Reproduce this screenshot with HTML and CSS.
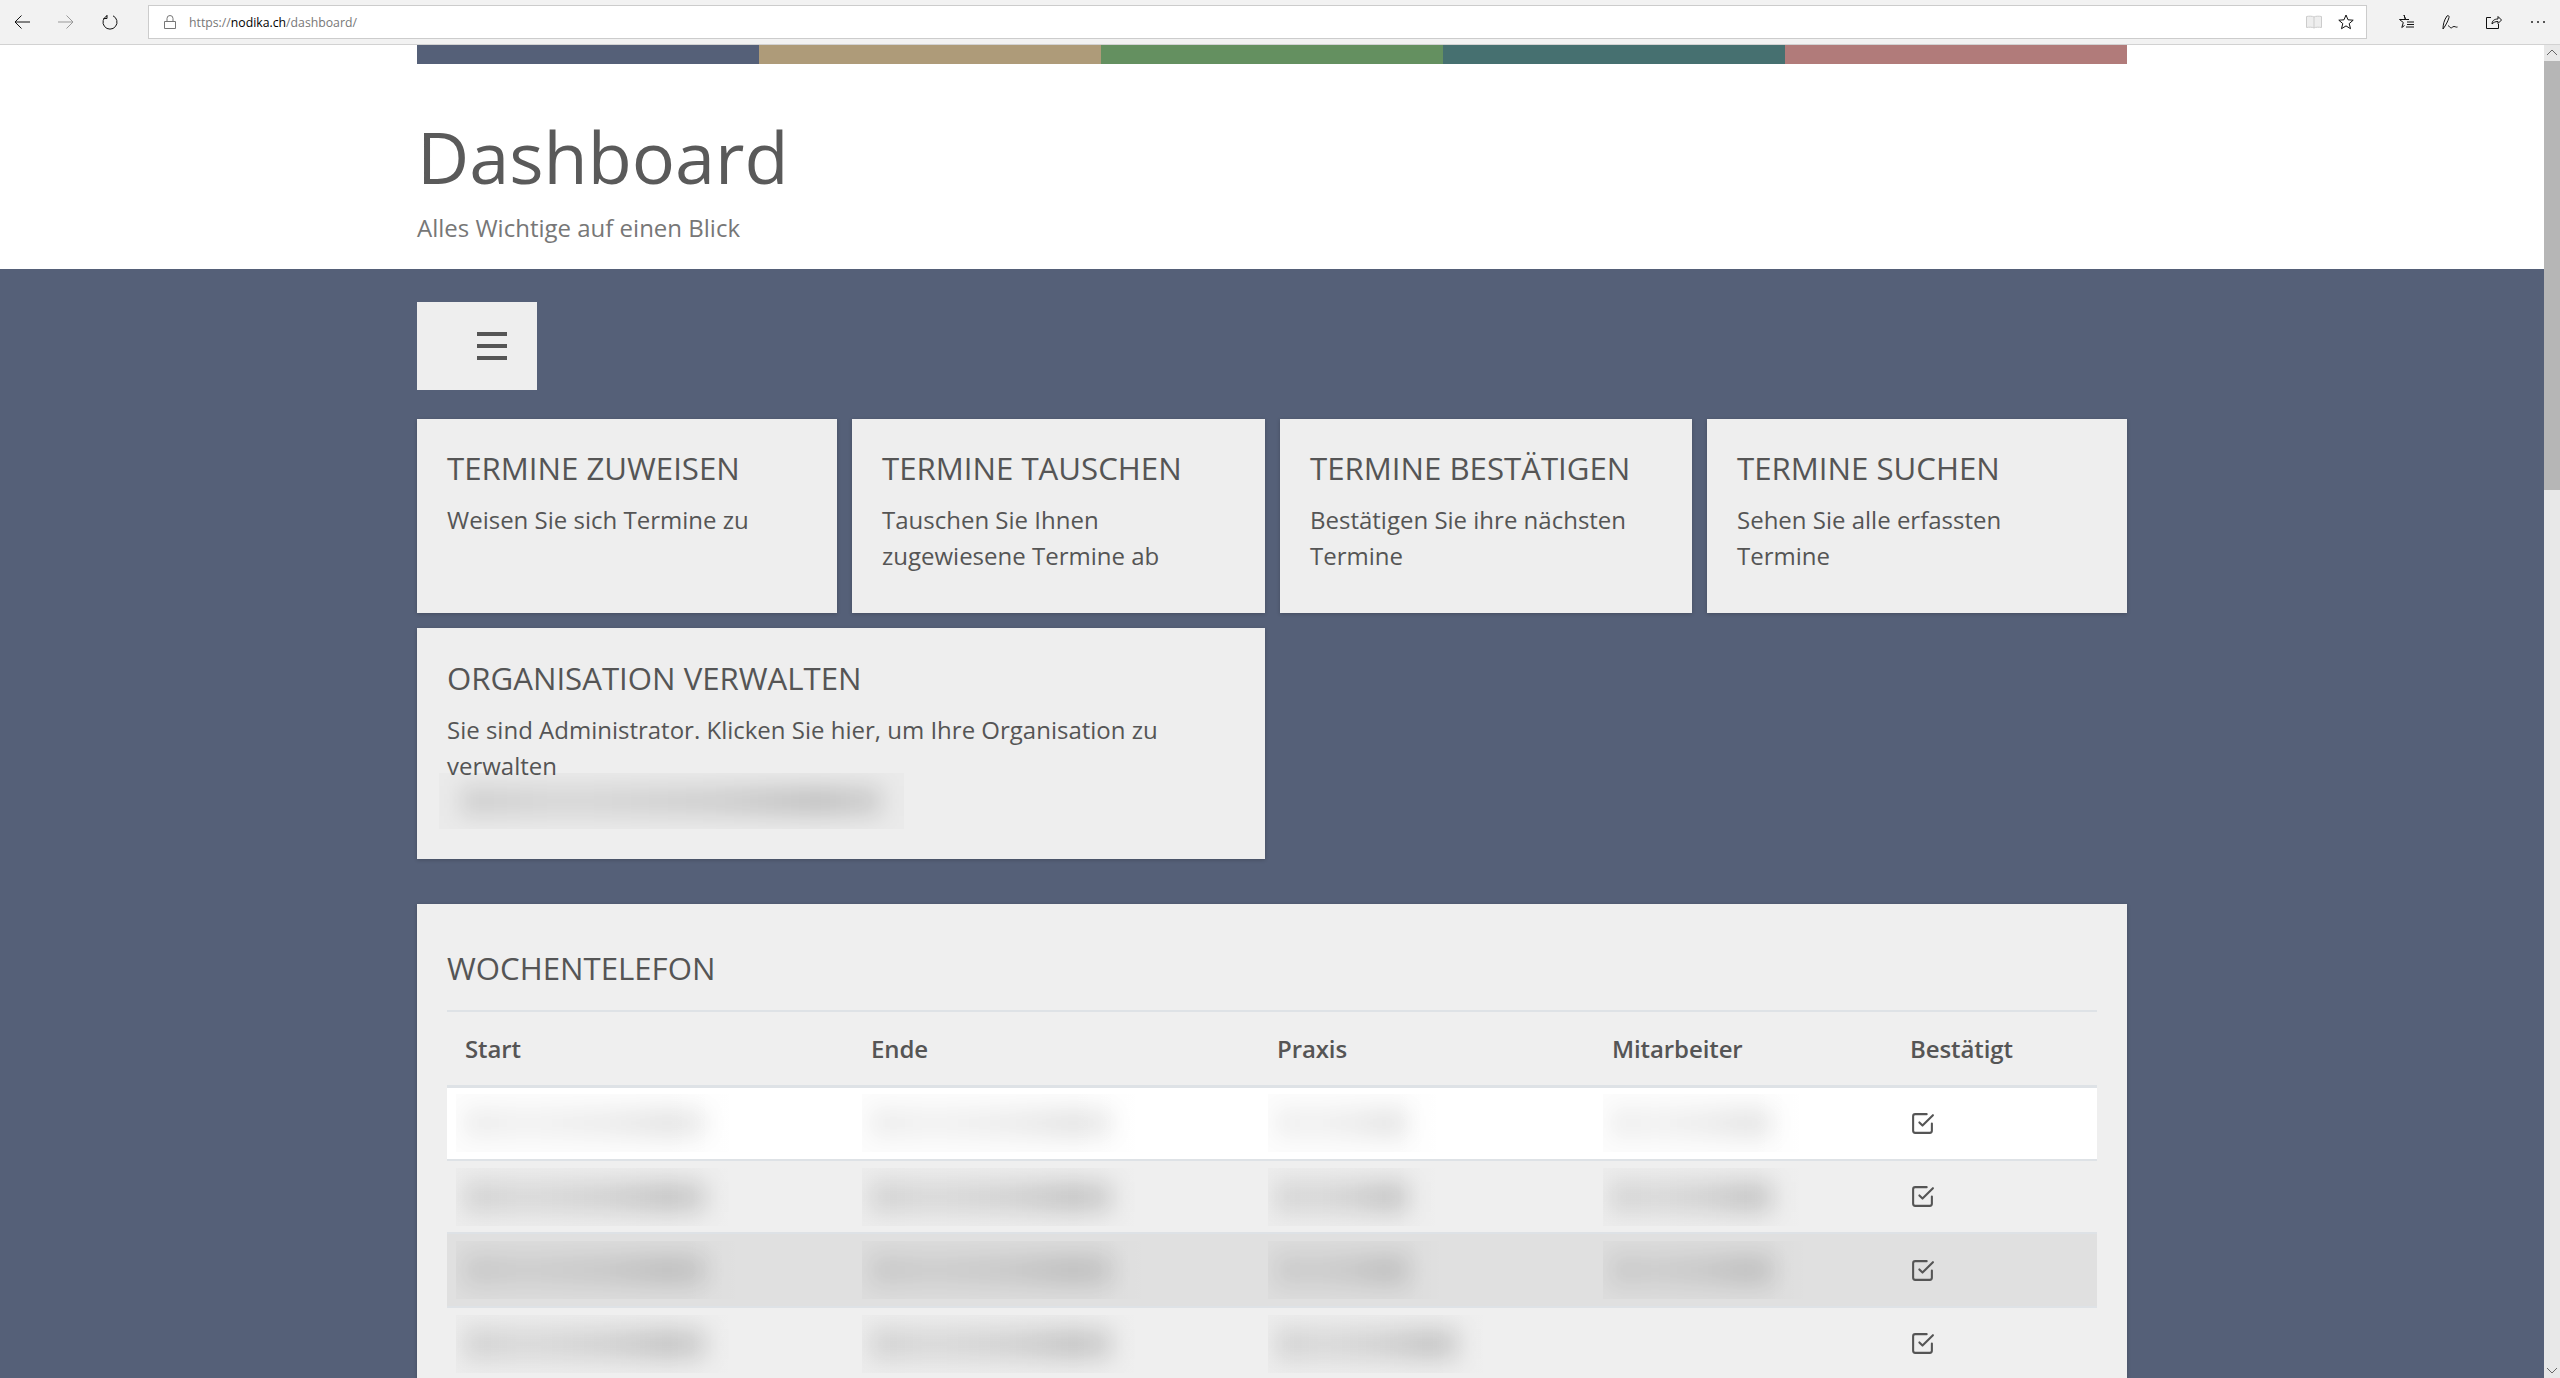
FILE: index.html
```html
<!DOCTYPE html>
<html lang="de">
<head>
    <meta charset="UTF-8">
    <meta name="viewport" content="width=device-width, initial-scale=1.0">
    <title>Dashboard</title>
    <link rel="stylesheet" href="styles.css">
</head>
<body>
    <header class="browser-bar">
        <div class="nav-icons">
            <svg class="icon" viewBox="0 0 16 16"><path d="M16 8H1M7.500 1.500 1 8l6.500 6.500"/></svg>
            <svg class="icon icon-muted" viewBox="0 0 16 16"><path d="M0 8h15M8.500 1.500 15 8l-6.500 6.500"/></svg>
            <svg class="icon" viewBox="0 0 16 16"><path d="M5 1.800a7 7 0 1 0 6 0M5 1v3.500H1.500"/></svg>
        </div>
        <div class="url-box">
            <svg class="icon-lock" viewBox="0 0 12 14"><path d="M.5 6.500h11v7H.5zM3 6.500V3.500a3 3 0 0 1 6 0v3"/></svg>
            <span class="url-text">https://<b>nodika.ch</b>/dashboard/</span>
            <svg class="icon-book" viewBox="0 0 16 14"><path d="M8 2C6.500 1 3 1 .5 1.500v11C3 12 6.500 12 8 13c1.500-1 5-1 7.500-.5v-11C13 1 9.500 1 8 2zM8 2v11"/></svg>
            <svg class="icon" viewBox="0 0 16 16"><path d="m8 1 2 4.800 5.200.4-4 3.400 1.300 5.100L8 11.900l-4.500 2.800 1.300-5.100-4-3.400L6 5.800z"/></svg>
        </div>
        <div class="tool-icons">
            <svg class="icon" viewBox="0 0 16 16"><path d="M6 1 7.500 5.500h-6l3.800 3-1.500 5 2.700-2M6 1l1.500 4.500H11M9 8h7M9 10.500h7M8 13h8"/></svg>
            <svg class="icon" viewBox="0 0 16 16"><path d="M1 15c0-4 1-9 4-13 1-1 2.500 0 2 1.500C6 7 4 11 1 15zm5-3c1-1 2 2 3 2s1.500-1.500 3-1.500 2 1 3.500.5"/></svg>
            <svg class="icon" viewBox="0 0 16 16"><path d="M5 3.500H.5v11h12V10M6 10c0-3 2-5 6-5V2.500L15.500 6 12 9.500V7.500c-3 0-4.500 1-6 2.500z"/></svg>
            <svg class="icon-dots" viewBox="0 0 16 4"><circle cx="2" cy="2" r="1"/><circle cx="8" cy="2" r="1"/><circle cx="14" cy="2" r="1"/></svg>
        </div>
    </header>

    <div class="viewport">
        <main class="page">
            <section class="hero">
                <div class="wrap">
                    <div class="strip">
                        <span class="strip-blue"></span>
                        <span class="strip-tan"></span>
                        <span class="strip-green"></span>
                        <span class="strip-teal"></span>
                        <span class="strip-rose"></span>
                    </div>
                    <h1>Dashboard</h1>
                    <p class="lead">Alles Wichtige auf einen Blick</p>
                </div>
            </section>

            <section class="content">
                <div class="wrap">
                    <button class="menu-btn" aria-label="Menü">
                        <span></span><span></span><span></span>
                    </button>

                    <div class="cards">
                        <a class="card">
                            <h4>Termine zuweisen</h4>
                            <p>Weisen Sie sich Termine zu</p>
                        </a>
                        <a class="card">
                            <h4>Termine tauschen</h4>
                            <p>Tauschen Sie Ihnen zugewiesene Termine ab</p>
                        </a>
                        <a class="card">
                            <h4>Termine bestätigen</h4>
                            <p>Bestätigen Sie ihre nächsten Termine</p>
                        </a>
                        <a class="card">
                            <h4>Termine suchen</h4>
                            <p>Sehen Sie alle erfassten Termine</p>
                        </a>
                        <a class="card card-wide">
                            <h4>Organisation verwalten</h4>
                            <p>Sie sind Administrator. Klicken Sie hier, um Ihre Organisation zu verwalten</p>
                            <div class="smudge smudge-org"><i></i></div>
                        </a>
                    </div>

                    <div class="panel">
                        <h4 class="panel-title">Wochentelefon</h4>
                        <table>
                            <colgroup>
                                <col class="col-date"><col class="col-date"><col class="col-place"><col class="col-person"><col>
                            </colgroup>
                            <thead>
                                <tr>
                                    <th>Start</th>
                                    <th>Ende</th>
                                    <th>Praxis</th>
                                    <th>Mitarbeiter</th>
                                    <th>Bestätigt</th>
                                </tr>
                            </thead>
                            <tbody>
                                <tr class="row-active">
                                    <td><div class="smudge smudge-date"><i></i></div></td>
                                    <td><div class="smudge smudge-date"><i></i></div></td>
                                    <td><div class="smudge smudge-place"><i></i></div></td>
                                    <td><div class="smudge smudge-person"><i></i></div></td>
                                    <td><svg class="check" viewBox="0 0 24 24"><path d="m9 11 3 3L22 4M21 12v7a2 2 0 0 1-2 2H5a2 2 0 0 1-2-2V5a2 2 0 0 1 2-2h11"/></svg></td>
                                </tr>
                                <tr>
                                    <td><div class="smudge smudge-date"><i></i></div></td>
                                    <td><div class="smudge smudge-date"><i></i></div></td>
                                    <td><div class="smudge smudge-place"><i></i></div></td>
                                    <td><div class="smudge smudge-person"><i></i></div></td>
                                    <td><svg class="check" viewBox="0 0 24 24"><path d="m9 11 3 3L22 4M21 12v7a2 2 0 0 1-2 2H5a2 2 0 0 1-2-2V5a2 2 0 0 1 2-2h11"/></svg></td>
                                </tr>
                                <tr class="row-dark">
                                    <td><div class="smudge smudge-date"><i></i></div></td>
                                    <td><div class="smudge smudge-date"><i></i></div></td>
                                    <td><div class="smudge smudge-place"><i></i></div></td>
                                    <td><div class="smudge smudge-person"><i></i></div></td>
                                    <td><svg class="check" viewBox="0 0 24 24"><path d="m9 11 3 3L22 4M21 12v7a2 2 0 0 1-2 2H5a2 2 0 0 1-2-2V5a2 2 0 0 1 2-2h11"/></svg></td>
                                </tr>
                                <tr>
                                    <td><div class="smudge smudge-date"><i></i></div></td>
                                    <td><div class="smudge smudge-date"><i></i></div></td>
                                    <td><div class="smudge smudge-long"><i></i></div></td>
                                    <td></td>
                                    <td><svg class="check" viewBox="0 0 24 24"><path d="m9 11 3 3L22 4M21 12v7a2 2 0 0 1-2 2H5a2 2 0 0 1-2-2V5a2 2 0 0 1 2-2h11"/></svg></td>
                                </tr>
                            </tbody>
                        </table>
                    </div>
                </div>
            </section>
        </main>

        <div class="scrollbar">
            <svg class="scroll-arrow" viewBox="0 0 16 16"><path d="m3 10 5-5 5 5"/></svg>
            <div class="scroll-thumb"></div>
            <svg class="scroll-arrow scroll-arrow-end" viewBox="0 0 16 16"><path d="m3 6 5 5 5-5"/></svg>
        </div>
    </div>
</body>
</html>
```

FILE: styles.css
```css
* {
    box-sizing: border-box;
}
html, body {
    height: 100%;
}
body {
    margin: 0;
    display: flex;
    flex-direction: column;
    overflow: hidden;
    font-family: "Open Sans", sans-serif;
    font-size: 24px;
    line-height: 36px;
    color: #555;
    background: #fff;
}

/* browser chrome */
.browser-bar {
    flex: none;
    height: 45px;
    display: flex;
    align-items: center;
    background: #f2f2f2;
    border-bottom: 1px solid #d2d2d2;
}
.icon {
    width: 16px;
    height: 16px;
    fill: none;
    stroke: #111;
    stroke-width: 1;
}
.icon-muted {
    stroke: #999;
}
.nav-icons {
    width: 148px;
    padding-left: 14px;
    display: flex;
    gap: 28px;
}
.url-box {
    width: 2219px;
    height: 34px;
    display: flex;
    align-items: center;
    padding: 0 12px 0 15px;
    background: #fff;
    border: 1px solid #ccc;
}
.icon-lock {
    width: 12px;
    height: 14px;
    fill: none;
    stroke: #777;
    margin-right: 13px;
}
.url-text {
    flex: 1;
    font-size: 12.25px;
    line-height: 18px;
    padding-top: 2px;
    color: #777;
}
.url-text b {
    font-weight: 400;
    color: #000;
}
.icon-book {
    width: 16px;
    height: 14px;
    fill: #eee;
    stroke: #ccc;
    margin-right: 16px;
}
.tool-icons {
    flex: 1;
    display: flex;
    align-items: center;
    gap: 28px;
    padding-left: 31px;
}
.icon-dots {
    width: 16px;
    height: 4px;
    fill: #222;
}

/* page */
.viewport {
    flex: 1;
    min-height: 0;
    display: flex;
}
.page {
    flex: 1;
    min-width: 0;
    overflow: hidden;
}
.wrap {
    width: 1710px;
    margin: 0 auto;
}
.strip {
    display: flex;
    height: 19px;
}
.strip span {
    flex: 1;
}
.strip-blue { background: #556078; }
.strip-tan { background: #ae9b79; }
.strip-green { background: #649060; }
.strip-teal { background: #467070; }
.strip-rose { background: #b17b7a; }

.hero {
    height: 224px;
}
h1 {
    margin: 49px 0 0;
    font-size: 72px;
    line-height: 86px;
    font-weight: 400;
    color: #5a5a5a;
}
.lead {
    margin: 11px 0 0;
    color: #777;
}

.content {
    min-height: 1200px;
    padding-top: 33px;
    background: #556078;
}
.menu-btn {
    display: flex;
    flex-direction: column;
    align-items: flex-end;
    gap: 8px;
    width: 120px;
    height: 88px;
    padding: 30px 30px 0 0;
    border: 0;
    background: #eee;
}
.menu-btn span {
    width: 30px;
    height: 4px;
    background: #555;
}

.cards {
    display: grid;
    grid-template-columns: 420px 413px 412px 420px;
    gap: 15px;
    margin-top: 29px;
}
.card {
    position: relative;
    min-height: 194px;
    padding: 31px 30px 0;
    background: #eee;
    box-shadow: 0 1px 4px rgba(0, 0, 0, 0.2);
}
.card-wide {
    grid-column: span 2;
    height: 231px;
    padding-top: 32px;
}
h4 {
    margin: 0;
    font-size: 31.2px;
    line-height: 36px;
    font-weight: 400;
    text-transform: uppercase;
    color: #555;
}
.card h4 {
    margin-bottom: 16px;
}
.card p {
    margin: 0;
}

.panel {
    margin-top: 45px;
    padding: 46px 30px 0;
    background: #efefef;
    box-shadow: 0 1px 4px rgba(0, 0, 0, 0.2);
}
.panel-title {
    height: 62px;
    border-bottom: 2px solid #dee2e6;
}
table {
    width: 1650px;
    table-layout: fixed;
    border-collapse: collapse;
}
.col-date { width: 406px; }
.col-place { width: 335px; }
.col-person { width: 298px; }
th {
    height: 74px;
    padding: 2px 18px 0;
    font-weight: 600;
    letter-spacing: -0.1px;
    text-align: left;
    border-bottom: 3px solid #dee2e6;
}
td {
    height: 73.4px;
    padding: 0 18px;
    border-bottom: 2px solid #dee2e6;
}
.row-active td {
    height: 74px;
}
tbody tr:last-child td {
    border-bottom: 0;
}
.row-active {
    background: #fff;
}
.row-dark {
    background: #e0e0e0;
}

/* blurred out personal data */
.smudge {
    display: flex;
    align-items: center;
    height: 58px;
    margin-left: -9px;
    padding: 0 34px 0 9px;
    background: linear-gradient(90deg, rgba(0, 0, 0, 0.012) 75%, rgba(0, 0, 0, 0));
    overflow: hidden;
}
.smudge i {
    display: block;
    height: 30px;
    width: 100%;
    background: linear-gradient(90deg, rgba(0, 0, 0, 0.11), rgba(0, 0, 0, 0.08) 25%, rgba(0, 0, 0, 0.11) 60%, rgba(0, 0, 0, 0.16) 85%, rgba(0, 0, 0, 0.11));
    filter: blur(11px);
}
.row-active .smudge i {
    opacity: 0.55;
}
.row-dark .smudge {
    background: linear-gradient(90deg, rgba(0, 0, 0, 0.02) 80%, rgba(0, 0, 0, 0));
}
.row-dark .smudge i {
    opacity: 0.8;
}
.smudge-date { width: 285px; }
.smudge-place { width: 175px; }
.smudge-person { width: 205px; }
.smudge-long { width: 225px; }
.smudge-org {
    position: absolute;
    left: 22px;
    top: 145px;
    width: 465px;
    height: 56px;
    margin: 0;
    padding: 0 22px;
    background: rgba(0, 0, 0, 0.014);
}
.check {
    display: block;
    width: 25px;
    height: 25px;
    fill: none;
    stroke: #555;
    stroke-width: 2;
    stroke-linecap: round;
    stroke-linejoin: round;
}

/* scrollbar */
.scrollbar {
    flex: none;
    width: 16px;
    display: flex;
    flex-direction: column;
    background: #e8e8e8;
}
.scroll-arrow {
    flex: none;
    width: 16px;
    height: 16px;
    fill: none;
    stroke: #666;
}
.scroll-thumb {
    flex: none;
    height: 429px;
    background: #b6b6b6;
}
.scroll-arrow-end {
    margin-top: auto;
}
```
